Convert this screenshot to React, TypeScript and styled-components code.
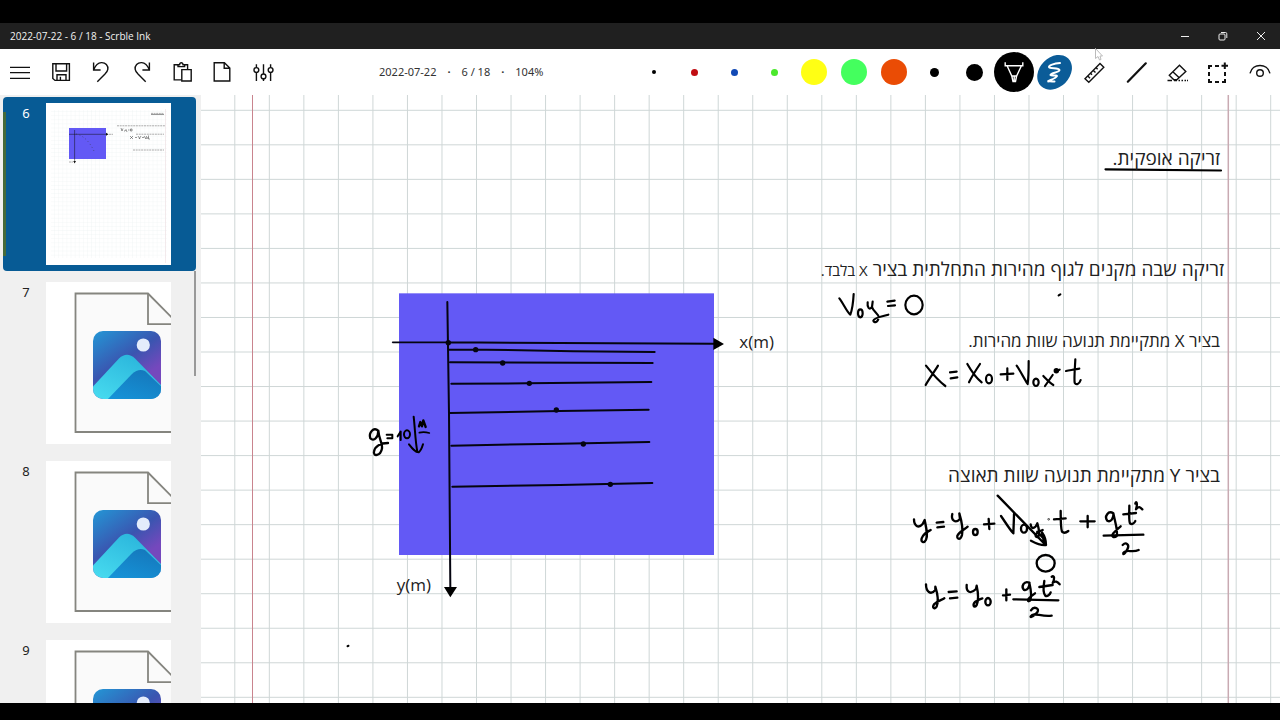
import React from "react";
import styled, { createGlobalStyle } from "styled-components";

const GlobalStyle = createGlobalStyle`
  * { box-sizing: border-box; }
  body { margin: 0; background: #000; }
  p, h1 { margin: 0; font-weight: 400; }
  button { border: 0; padding: 0; background: none; font: inherit; color: inherit; }
`;

const Window = styled.div`
  display: flex;
  flex-direction: column;
  height: 100vh;
  padding: 23px 0 17px;
  background: #000;
  color: #222;
  font-family: "Open Sans", "Noto Sans", sans-serif;
`;

const TitleBar = styled.header`
  display: flex;
  flex: 0 0 26px;
  align-items: center;
  justify-content: space-between;
  padding-left: 10px;
  background: #202020;
  color: #f2f2f2;
`;

const Title = styled.h1`
  font-size: 10px;
  line-height: 16px;
`;

const WindowButtons = styled.div`
  display: flex;
`;

const WindowButton = styled.button`
  display: grid;
  place-items: center;
  width: 38px;
  height: 26px;
`;

const Toolbar = styled.div`
  position: relative;
  display: flex;
  flex: 0 0 46px;
  align-items: center;
  padding-right: 2px;
  background: #fff;
`;

const Actions = styled.div`
  display: flex;
  width: 284px;
`;

const ToolButton = styled.button<{ $wide?: boolean }>`
  display: grid;
  flex: 1 0 ${(p) => (p.$wide ? 41 : 40)}px;
  place-items: center;
  height: 46px;
`;

const Status = styled.div`
  display: flex;
  flex: 1;
  gap: 11px;
  padding-left: 95px;
  color: #333;
  font-family: "Noto Sans", sans-serif;
  font-size: 11px;
  line-height: 16px;
  white-space: pre;
`;

const Dot = styled.span`
  font-weight: 700;
`;

const Pens = styled.div`
  display: flex;
  flex: none;
`;

const Swatch = styled.span<{ $size: number; $color: string }>`
  width: ${(p) => p.$size}px;
  height: ${(p) => p.$size}px;
  border-radius: 50%;
  background: ${(p) => p.$color};
`;

const Pointer = styled.svg`
  position: absolute;
  top: -1px;
  left: 1094px;
`;

const Workspace = styled.div`
  display: flex;
  flex: 1;
  min-height: 0;
`;

const Sidebar = styled.nav`
  position: relative;
  display: flex;
  flex: 0 0 201px;
  flex-direction: column;
  gap: 5px;
  padding: 2px 5px 0 3px;
  overflow: hidden;
  background: #f0f0f0;
`;

const ScrollThumb = styled.div`
  position: absolute;
  top: 176px;
  left: 194px;
  width: 2px;
  height: 105px;
  background: #999;
`;

const PageTile = styled.button<{ $active?: boolean }>`
  display: flex;
  flex: 0 0 174px;
  width: 193px;
  padding: 6px 25px 6px 0;
  border-radius: 4px;
  background: ${(p) => (p.$active ? "#075b95" : "transparent")};
  color: ${(p) => (p.$active ? "#fff" : "#222")};
`;

const Mark = styled.span<{ $active?: boolean }>`
  width: 3px;
  height: 144px;
  margin-top: 9px;
  background: ${(p) => (p.$active ? "#456a3a" : "transparent")};
`;

const PageNumber = styled.span`
  flex: 1;
  font-family: "Noto Sans", sans-serif;
  font-size: 13px;
  line-height: 20px;
`;

const Thumb = styled.svg`
  flex: none;
  width: 125px;
  height: 162px;
  background: #fff;
`;

const Canvas = styled.main`
  position: relative;
  flex: 1;
  overflow: hidden;
  background: #fff;
`;

const Ink = styled.svg`
  display: block;
  width: 100%;
  height: 100%;
`;

const Note = styled.p<{ $x: number; $y: number; $size: number }>`
  position: absolute;
  top: ${(p) => p.$y}px;
  right: calc(100% - ${(p) => p.$x}px);
  color: #222;
  font-size: ${(p) => p.$size}px;
  line-height: 24px;
  white-space: nowrap;
`;

const Small = styled.span`
  font-size: 15px;
`;

const Icon = ({ size = 32, width = 1.4, children }: { size?: number; width?: number; children: React.ReactNode }) => (
  <svg width={size} height={size} viewBox={`0 0 ${size} ${size}`} fill="none" stroke="#111" strokeWidth={width}>
    {children}
  </svg>
);

const undoPath = "M8.6 6.5V14H15.6M8.8 13.6C10.6 9 13 6.8 16.4 6.6C20.6 6.4 23.4 9.8 22.8 13.4C22.5 15.4 21.4 16.4 20 17.9L12.3 25.7";

const actions = [
  { label: "Menu", icon: <path d="M6 11.4H26M6 16.6H26M6 22.4H26" /> },
  {
    label: "Save",
    icon: <path d="M7.8 7.8H24.4V24.4H10L7.8 22.4ZM11 8V15H21.6V8M12 24V18.8H21V24M15.4 24V20.8" />,
  },
  { label: "Undo", icon: <path d={undoPath} /> },
  { label: "Redo", icon: <g transform="matrix(-1 0 0 1 32 0)"><path d={undoPath} /></g> },
  {
    label: "Paste",
    icon: (
      <>
        <path d="M14.5 23.9H7.2V8.8H11M17.4 8.8H20.6V13" />
        <path d="M11 10.6V8.8H12.6C12.8 6 15.8 6 16 8.8H17.6V10.6Z" />
        <path d="M14.8 13.6H24.2V25H14.8Z" />
      </>
    ),
  },
  { label: "New page", icon: <path d="M7.2 6.8H17.4L22.8 12V25H7.2ZM17.2 7V12.2H22.6" /> },
  {
    label: "Settings",
    icon: (
      <>
        <path d="M8.4 8.2V11.6M8.4 16.4V25M15.5 8.2V18M15.5 22.8V25M22.6 8.2V11.6M22.6 16.4V25" />
        <circle cx="8.4" cy="14" r="2.4" />
        <circle cx="15.5" cy="20.4" r="2.4" />
        <circle cx="22.6" cy="14" r="2.4" />
      </>
    ),
  },
];

const pens = [
  { label: "Fine black pen", size: 4, color: "#000" },
  { label: "Red pen", size: 7, color: "#c00d12" },
  { label: "Blue pen", size: 7, color: "#1149b5" },
  { label: "Green pen", size: 7, color: "#4be82c" },
  { label: "Yellow marker", size: 26, color: "#ffff14" },
  { label: "Green marker", size: 26, color: "#44ff5e" },
  { label: "Orange marker", size: 26, color: "#ea4c05" },
  { label: "Black pen", size: 9, color: "#000" },
  { label: "Thick black pen", size: 17, color: "#000" },
];

const PhotoPlaceholder = () => (
  <>
    <defs>
      <linearGradient id="sky" x1="0" y1="0" x2="0.7" y2="1">
        <stop offset="0" stopColor="#2397d6" />
        <stop offset="0.5" stopColor="#3a55b0" />
        <stop offset="0.8" stopColor="#7548bd" />
      </linearGradient>
      <linearGradient id="ridge" x1="0" y1="1" x2="0.8" y2="0">
        <stop offset="0" stopColor="#4be0f2" />
        <stop offset="1" stopColor="#28b2da" />
      </linearGradient>
      <linearGradient id="slope" x1="0" y1="1" x2="0.6" y2="0">
        <stop offset="0" stopColor="#1697dc" />
        <stop offset="1" stopColor="#1579bd" />
      </linearGradient>
      <clipPath id="photo">
        <rect x="47" y="49" width="68" height="68" rx="10" />
      </clipPath>
    </defs>
    <path d="M29.5 11.5H102L140 50V150H29.5Z" fill="#fafafa" stroke="#85857f" strokeWidth="1.8" />
    <path d="M102 11.5V42.2H130" fill="none" stroke="#85857f" strokeWidth="1.8" />
    <g clipPath="url(#photo)">
      <rect x="47" y="49" width="68" height="68" fill="url(#sky)" />
      <circle cx="97.3" cy="63" r="6.6" fill="#e4ecfb" />
      <path d="M40 112L73 76.5Q81 69 89 76.5L118 106V120H40Z" fill="url(#ridge)" />
      <path d="M60 119L86 92Q92.5 86 99 89L120 109V120Z" fill="url(#slope)" />
    </g>
  </>
);

const PagePreview = () => (
  <>
    <defs>
      <pattern id="miniGrid" width="4.1" height="4.1" patternUnits="userSpaceOnUse">
        <path d="M0 0H4.1M0 0V4.1" stroke="#e9eeee" strokeWidth="0.5" />
      </pattern>
    </defs>
    <rect x="5" y="7" width="116" height="148" fill="url(#miniGrid)" />
    <path d="M119.5 6V160" stroke="#efdfe2" strokeWidth="0.6" />
    <rect x="23" y="25" width="37" height="31" fill="#6359f5" />
    <g stroke="#333" strokeWidth="0.5" fill="none">
      <path d="M23 31.3H60M28.6 27V58" stroke="#111" />
      <path d="M30 31C39 33 44 40 48 48" strokeDasharray="1 2.5" />
      <path d="M105 10.4H118" strokeWidth="0.8" stroke="#999" strokeDasharray="2 0.6" />
      <path d="M105 11.5H118" />
      <path d="M71 22.8H119M90 31.2H118M87 47H118" strokeWidth="1" stroke="#aaa" strokeDasharray="2 0.7" />
      <path d="M75 25L76 28L77 25.5M78 28H79L80 26.5L81 29M82 27H83.5M84.5 26V28H86V26Z" />
      <path d="M84 33L87 36M87 33L84 36M89 34.5H91M92 33L94 36M95 33L93 36M96 34.5H98M98 33L100 36L100.5 33M101 36L102 34M102.5 32.5V36H104" />
      <path d="M63 31.3H67M23 59H27" stroke="#999" strokeWidth="0.8" strokeDasharray="2 0.5" />
    </g>
    <path d="M60 29.8L62.5 31.3L60 32.8ZM27.3 58H30L28.6 60.5Z" fill="#111" />
  </>
);

const Grid = () => (
  <>
    <defs>
      <pattern id="grid" x="33.3" y="14.8" width="34.53" height="34.53" patternUnits="userSpaceOnUse">
        <path d="M0.5 0V34.53M0 0.5H34.53" stroke="#c9d2d2" strokeOpacity="0.9" />
      </pattern>
    </defs>
    <rect width="100%" height="100%" fill="url(#grid)" />
    <path d="M51.5 0V4000" stroke="#c9848e" />
    <path d="M1027.300 0V4000" stroke="#c9aab2" strokeWidth="1.5" />
  </>
);

const Graph = () => (
  <g transform="translate(360 280) scale(0.33333)" stroke="#050510" fill="none" strokeWidth="6" strokeLinecap="round">
    <rect x="117" y="40" width="945" height="785" fill="#6359f5" stroke="none" />
    <path d="M98 187H265" strokeWidth="5" />
    <path d="M262 66L267 400L271 925M265 187L1062 191" />
    <path d="M252 921H291L271 952ZM1060 173L1092 192L1060 210Z" fill="#000" stroke="none" />
    <path d="M268 209L380 209L640 214L884 216M270 247L878 249M274 311L500 310L874 306M270 399L600 393L866 389M274 497L600 491L868 486M277 620L600 615L877 609" />
    <g fill="#050510" stroke="none">
      <circle cx="265" cy="188" r="8" />
      <circle cx="347" cy="209" r="8" />
      <circle cx="428" cy="249" r="8" />
      <circle cx="508" cy="310" r="8" />
      <circle cx="589" cy="390" r="8" />
      <circle cx="670" cy="492" r="8" />
      <circle cx="751" cy="613" r="8" />
    </g>
  </g>
);

const Handwriting = () => (
  <g stroke="#000" fill="none" strokeLinecap="round" strokeLinejoin="round">
    {/* g = 10 m, pointing down */}
    <g transform="translate(360 285) scale(0.33333)" strokeWidth="7">
      <path d="M54 437C42 424 25 443 31 460C42 472 55 455 55 437C56 460 68 475 66 490C62 514 38 515 42 500C45 483 62 474 84 474" />
      <path d="M80 449H97M97 449V460H82M113 454L122 440V465" strokeWidth="6" />
      <ellipse cx="141" cy="448" rx="9" ry="12" strokeWidth="6" />
      <path d="M161 395C165 430 166 470 172 500M147 478C158 492 166 502 176 502C182 498 186 488 189 478" strokeWidth="6" />
      <path d="M177 424L181 411L186 424L190 406L197 426" strokeWidth="7" />
      <path d="M178 443C188 440 198 441 208 444" strokeWidth="5" />
    </g>
    {/* underline of the heading */}
    <path d="M1105.5 169.3L1221 170.5" strokeWidth="2.2" />
    {/* V0y = 0 and x = x0 + V0x t */}
    <g transform="translate(800 250) scale(0.33333)" strokeWidth="6.5">
      <path d="M118 145C130 160 140 185 151 194C158 175 160 150 161 132" />
      <ellipse cx="181" cy="190" rx="7" ry="12" />
      <path d="M203 157C201 172 208 182 216 171L218 155M216 171C220 186 236 190 236 202C234 218 222 220 220 212C222 203 245 200 265 194" />
      <path d="M262 155L284 152M264 168L285 166" />
      <ellipse cx="342" cy="165" rx="26" ry="28" />
      <path d="M776 136L781 133" />
      <path d="M378 347C400 375 418 395 436 408M414 347C400 370 385 390 377 405M450 367L470 365M452 385L472 382" />
      <path d="M502 342C515 365 530 385 545 397M540 342C528 360 515 380 507 397" />
      <ellipse cx="567" cy="387" rx="9" ry="13" />
      <path d="M602 373L640 371M622 355V390M650 347C662 365 672 385 683 402C686 380 686 355 686 333" />
      <ellipse cx="708" cy="397" rx="8" ry="11" />
      <path d="M730 378C740 388 748 398 760 405M758 375L735 408" />
      <circle cx="769" cy="362" r="5" fill="#000" />
      <path d="M769 362L779 359M826 328C825 350 822 385 824 398C828 406 838 403 842 390M798 363C815 360 830 357 838 356" />
    </g>
    {/* y = y0 + V0y t + gt²/2, then the reduced form */}
    <g transform="translate(900 455) scale(0.33333)" strokeWidth="7">
      <path d="M42 193C42 212 55 222 68 207L74 195C80 225 84 240 78 254C72 266 62 262 65 250C70 235 82 230 92 225M110 203L130 201M112 217L132 215" />
      <path d="M157 177C152 195 166 207 180 192L178 175C184 195 190 220 186 240C182 256 170 254 172 242C178 230 195 222 203 215" />
      <ellipse cx="226" cy="231" rx="7" ry="9" />
      <path d="M252 208L283 206M266 192L268 222M303 183C315 200 328 222 340 235C341 210 342 190 342 177" />
      <ellipse cx="372" cy="221" rx="9" ry="12" />
      <path d="M392 208C394 224 405 222 412 205C418 225 420 240 414 246C402 248 404 233 428 225" />
      <path d="M293 122L437 270M393 257C410 266 425 272 438 270C438 255 432 240 426 232L432 262M412 230L430 250" />
      <circle cx="446" cy="193" r="1" strokeWidth="5" />
      <path d="M482 168C482 195 482 220 486 230C492 236 500 232 505 228M462 193L497 190M541 199H584M563 183V217" />
      <path d="M640 175C625 165 612 185 622 197C632 203 642 190 640 175C645 200 655 230 650 243C642 250 632 245 640 235C646 228 652 222 662 214" />
      <path d="M688 152C688 175 686 198 690 205C696 210 704 204 706 198M670 178L708 174M706 146C708 136 714 144 708 163C716 152 720 156 727 163" />
      <path d="M611 242L730 239M668 270C678 260 690 268 682 283C676 295 668 302 670 294C680 280 695 295 716 285" />
      <ellipse cx="437" cy="325" rx="27" ry="25" />
      <path d="M78 388C78 410 92 422 106 405L106 395C114 420 116 440 110 455C103 465 96 458 102 448C112 438 125 435 133 430M146 411L170 409M150 430L172 428" />
      <path d="M200 390C198 412 212 418 228 402L230 392C234 410 236 435 230 450C222 462 216 450 226 440C234 435 240 432 247 430" />
      <ellipse cx="264" cy="440" rx="8" ry="11" />
      <path d="M309 421L330 419M319 403V436M340 433L475 436" />
      <path d="M388 383C372 376 362 395 372 405C382 408 390 395 388 383C392 400 396 425 390 437C382 443 382 432 392 425L405 415" />
      <path d="M433 378C430 395 430 415 436 422C442 426 450 418 452 412M418 396L458 390M455 365C463 360 465 370 458 384C466 376 472 380 479 388" />
      <path d="M393 466C402 452 420 460 412 472C404 482 390 490 392 484C402 470 420 486 455 482" />
    </g>
    <path d="M347.5 646.2L348.5 645.8" strokeWidth="2" />
  </g>
);

export default function App() {
  return (
    <Window>
      <GlobalStyle />
      <TitleBar>
        <Title>2022-07-22 - 6 / 18 - Scrble Ink</Title>
        <WindowButtons>
          <WindowButton aria-label="Minimize">
            <svg width="12" height="12" stroke="#eee" fill="none"><path d="M2 6.5H10" /></svg>
          </WindowButton>
          <WindowButton aria-label="Restore">
            <svg width="12" height="12" stroke="#eee" fill="none">
              <rect x="2" y="4" width="6" height="6" rx="1" />
              <path d="M4 2.5H8.5Q9.800 2.5 9.800 3.800V8" />
            </svg>
          </WindowButton>
          <WindowButton aria-label="Close">
            <svg width="12" height="12" stroke="#eee" fill="none"><path d="M2 2L10 10M10 2L2 10" /></svg>
          </WindowButton>
        </WindowButtons>
      </TitleBar>

      <Toolbar role="toolbar">
        <Actions>
          {actions.map((a) => (
            <ToolButton key={a.label} aria-label={a.label}>
              <Icon>{a.icon}</Icon>
            </ToolButton>
          ))}
        </Actions>
        <Status>
          <span>2022-07-22</span>
          <Dot>·</Dot>
          <span>6 / 18</span>
          <Dot>·</Dot>
          <span>104%</span>
        </Status>
        <Pens>
          {pens.map((p) => (
            <ToolButton key={p.label} aria-label={p.label}>
              <Swatch $size={p.size} $color={p.color} />
            </ToolButton>
          ))}
          <ToolButton aria-label="Pen" aria-pressed="true">
            <Icon size={40}>
              <circle cx="20" cy="20" r="20" fill="#000" stroke="none" />
              <path d="M11.2 10.3V13.7H28.8V10.3M13.2 14L17.8 24H22.6L27.3 14M17.8 24L19 29.5H21.5L22.6 24M20.2 24V29" stroke="#fff" />
            </Icon>
          </ToolButton>
          <ToolButton aria-label="Freehand" aria-pressed="true">
            <Icon size={40} width={2}>
              <ellipse cx="20.6" cy="20.3" rx="19.4" ry="15" transform="rotate(-45 20.6 20.3)" fill="#0b5c98" stroke="none" />
              <path d="M26 11C20 11.500 14.500 13.500 15 15C16 17 24.500 15.500 25.500 18C25.500 20.500 16 21 16.500 23C17.500 24.500 23 22.500 23 24C22 26.500 16 28 13.500 29.500C16 29 18 29.500 20.500 29.500" stroke="#fff" strokeLinecap="round" />
            </Icon>
          </ToolButton>
          <ToolButton aria-label="Ruler">
            <Icon>
              <path d="M7 22.8L10.8 26.3L25.8 11.3L22 7.5ZM9.8 20L12 22.2M12.5 17.2L14 18.8M15.3 14.4L17.5 16.6M18 11.6L19.6 13.2" />
            </Icon>
          </ToolButton>
          <ToolButton $wide aria-label="Line">
            <Icon width={2.2}><path d="M8.8 25.7L26.8 7.3" strokeLinecap="round" /></Icon>
          </ToolButton>
          <ToolButton $wide aria-label="Eraser">
            <Icon>
              <path d="M19.5 9.3L25.8 15.4L16.8 23.8H13.8L9.3 19.3ZM12.8 15.7L19 21.6" />
              <path d="M7.5 24.5H12M14 24.5H17M18.5 24.5H20M21.5 24.5H23M24.5 24.5H26M27 24.5H28" />
            </Icon>
          </ToolButton>
          <ToolButton $wide aria-label="Select">
            <Icon width={2}>
              <path d="M8 13V10H11M14 10H18M8 16V20M8 23V26H11M14 26H18M21 26H24V23M24 16V20M20.5 9.7H27M23.8 6.5V13" />
            </Icon>
          </ToolButton>
          <ToolButton $wide aria-label="View">
            <Icon>
              <path d="M8 17.3C10.5 6.8 25.5 6.8 28 17.3" />
              <circle cx="18" cy="17" r="3.3" />
            </Icon>
          </ToolButton>
        </Pens>
        <Pointer width="10" height="14" fill="#fff" stroke="#bbb">
          <path d="M1.5 0.5V10.5L4 8.5L5.5 12L7 11.5L6 8H8.5Z" />
        </Pointer>
      </Toolbar>

      <Workspace>
        <Sidebar aria-label="Pages">
          {[6, 7, 8, 9].map((n) => (
            <PageTile key={n} $active={n === 6}>
              <Mark $active={n === 6} />
              <PageNumber>{n}</PageNumber>
              <Thumb viewBox="0 0 125 162">{n === 6 ? <PagePreview /> : <PhotoPlaceholder />}</Thumb>
            </PageTile>
          ))}
          <ScrollThumb />
        </Sidebar>
        <Canvas>
          <Ink>
            <Grid />
            <g transform="translate(-201 -95)">
              <Graph />
              <Handwriting />
            </g>
          </Ink>
          <Note dir="rtl" $x={1019} $y={51} $size={19}>זריקה אופקית.</Note>
          <Note dir="rtl" $x={1023} $y={162} $size={19}>
            זריקה שבה מקנים לגוף מהירות התחלתית בציר <Small>X בלבד.</Small>
          </Note>
          <Note dir="rtl" $x={1019} $y={234} $size={17}>בציר X מתקיימת תנועה שוות מהירות.</Note>
          <Note dir="rtl" $x={1019} $y={368} $size={19}>בציר Y מתקיימת תנועה שוות תאוצה</Note>
          <Note $x={573} $y={235} $size={17}>x(m)</Note>
          <Note $x={230} $y={478} $size={17}>y(m)</Note>
        </Canvas>
      </Workspace>
    </Window>
  );
}
